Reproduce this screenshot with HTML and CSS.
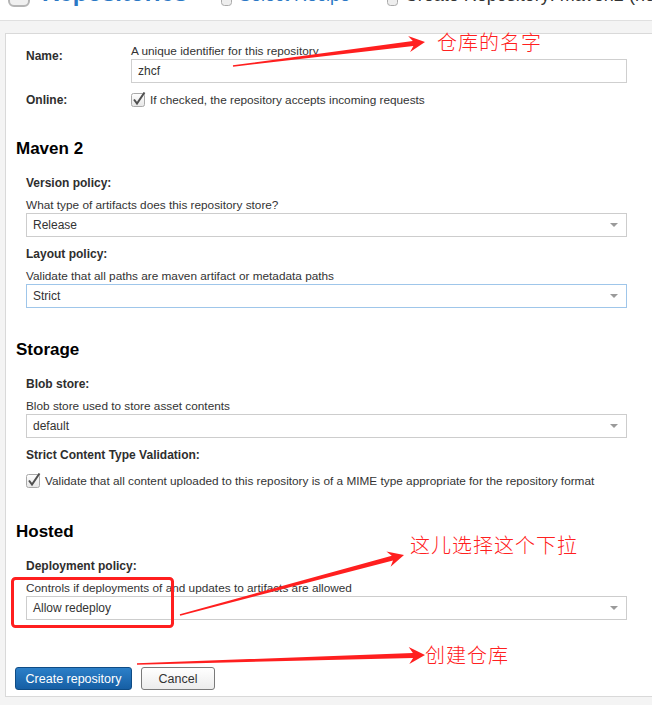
FILE: index.html
```html
<!DOCTYPE html>
<html>
<head>
<meta charset="utf-8">
<link rel="stylesheet" href="styles.css">
</head>
<body>
<div class="topbar">
  <div class="crumbs">
    <svg class="db-icon" width="22" height="26" viewBox="0 0 22 26"><rect x="1" y="1" width="20" height="24" rx="5" fill="#f0f0f0" stroke="#b5b5b5" stroke-width="2"/></svg>
    <span class="crumb-title">Repositories</span>
    <span class="crumb-sep">›</span>
    <svg class="db-small" width="11" height="14" viewBox="0 0 11 14"><rect x="0.5" y="0.5" width="10" height="13" rx="3" fill="#eee" stroke="#aaa"/></svg>
    <span class="crumb-link">Select Recipe</span>
    <span class="crumb-sep crumb-sep-2">›</span>
    <svg class="db-small" width="11" height="14" viewBox="0 0 11 14"><rect x="0.5" y="0.5" width="10" height="13" rx="3" fill="#eee" stroke="#aaa"/></svg>
    <span class="crumb-current">Create Repository: maven2 (hosted)</span>
  </div>
</div>

<div class="main">
  <div class="panel">
    <div class="pair pair-name">
      <div class="pair-label pair-label-name">Name:</div>
      <div class="pair-field">
        <div class="desc">A unique identifier for this repository</div>
        <div class="textbox">zhcf</div>
      </div>
    </div>
    <div class="pair pair-online">
      <div class="pair-label">Online:</div>
      <div class="check-row">
        <svg class="checkbox" width="15" height="15" viewBox="0 0 15 15"><defs><linearGradient id="cb1" x1="0" y1="0" x2="0" y2="1"><stop offset="0" stop-color="#ffffff"/><stop offset="1" stop-color="#e6e6e6"/></linearGradient></defs><rect x="0.5" y="1.5" width="13" height="13" rx="2" fill="url(#cb1)" stroke="#a9a9a9"/><path d="M3 7.5 L6 11.5 L13.5 0.5" fill="none" stroke="#505050" stroke-width="2"/></svg>
        <span>If checked, the repository accepts incoming requests</span>
      </div>
    </div>

    <h2 class="section-title">Maven 2</h2>
    <div class="field field-first">
      <div class="label">Version policy:</div>
      <div class="desc desc-gap">What type of artifacts does this repository store?</div>
      <div class="select"><span>Release</span><span class="caret"></span></div>
    </div>
    <div class="field">
      <div class="label">Layout policy:</div>
      <div class="desc desc-gap">Validate that all paths are maven artifact or metadata paths</div>
      <div class="select select-focus"><span>Strict</span><span class="caret"></span></div>
    </div>

    <h2 class="section-title">Storage</h2>
    <div class="field field-first">
      <div class="label">Blob store:</div>
      <div class="desc desc-gap">Blob store used to store asset contents</div>
      <div class="select"><span>default</span><span class="caret"></span></div>
    </div>
    <div class="field">
      <div class="label">Strict Content Type Validation:</div>
      <div class="check-row check-row-gap">
        <svg class="checkbox" width="15" height="15" viewBox="0 0 15 15"><defs><linearGradient id="cb2" x1="0" y1="0" x2="0" y2="1"><stop offset="0" stop-color="#ffffff"/><stop offset="1" stop-color="#e6e6e6"/></linearGradient></defs><rect x="0.5" y="1.5" width="13" height="13" rx="2" fill="url(#cb2)" stroke="#a9a9a9"/><path d="M3 7.5 L6 11.5 L13.5 0.5" fill="none" stroke="#505050" stroke-width="2"/></svg>
        <span>Validate that all content uploaded to this repository is of a MIME type appropriate for the repository format</span>
      </div>
    </div>

    <h2 class="section-title section-title-wide">Hosted</h2>
    <div class="field field-first">
      <div class="label">Deployment policy:</div>
      <div class="desc desc-gap">Controls if deployments of and updates to artifacts are allowed</div>
      <div class="select"><span>Allow redeploy</span><span class="caret"></span></div>
    </div>

    <div class="buttons">
      <button class="btn btn-primary" type="button">Create repository</button>
      <button class="btn btn-default" type="button">Cancel</button>
    </div>
  </div>
</div>

<svg class="annotations" width="652" height="705" viewBox="0 0 652 705">
  <polygon fill="#ff1f1f" points="232.9,65.3 412.8,41.0 408.1,36.0 425,42 410.1,51.9 413.4,46.0 233.1,66.7"/>
  <rect x="12.5" y="578.5" width="160" height="48" rx="3" fill="none" stroke="#ff1f1f" stroke-width="3"/>
  <polygon fill="#ff1f1f" points="179.8,614.3 391.8,555.7 386.4,551.4 404,555 390.6,566.8 393.0,560.5 180.2,615.7"/>
  <polygon fill="#ff1f1f" points="137,663.3 412.9,652.9 408.7,647.0 425,655 409.3,664.0 413.1,657.9 137,664.7"/>
</svg>
<div class="note note-name">仓库的名字</div>
<div class="note note-select">这儿选择这个下拉</div>
<div class="note note-create">创建仓库</div>
</body>
</html>
```

FILE: styles.css
```css
html, body {
  margin: 0;
  padding: 0;
}
body {
  width: 652px;
  height: 705px;
  overflow: hidden;
  background: #f4f4f4;
  font-family: "Liberation Sans", Arial, sans-serif;
  color: #333;
  position: relative;
}

/* top breadcrumb bar (clipped) */
.topbar {
  height: 20px;
  background: #fff;
  border-bottom: 1px solid #e0e0e0;
  overflow: hidden;
}
.crumbs {
  display: flex;
  align-items: baseline;
  height: 28px;
  margin-top: -21px;
  padding-left: 8px;
  white-space: nowrap;
}
.crumbs > * {
  flex: none;
}
.db-icon {
  align-self: flex-end;
  margin-bottom: 0;
  margin-right: 12px;
}
.crumb-title {
  font-size: 24px;
  font-weight: bold;
  color: #2b78c5;
  line-height: 28px;
}
.crumb-sep {
  font-size: 14px;
  color: #aaa;
  margin: 0 16px 0 13px;
}
.crumb-sep-2 {
  margin-left: 16px;
}
.db-small {
  align-self: flex-end;
  margin-bottom: 1px;
  margin-right: 7px;
}
.crumb-link {
  font-size: 18px;
  color: #2b78c5;
}
.crumb-current {
  font-size: 18px;
  color: #333;
}

/* main panel */
.main {
  padding: 12px 0 9px 5px;
}
.panel {
  background: #fff;
  border: 1px solid #d9d9d9;
  border-right: 0;
  padding: 0 25px 6px 10px;
}

.pair {
  display: flex;
  margin-left: 10px;
}
.pair-name {
  padding-top: 10px;
}
.pair-online {
  margin-top: 10px;
}
.pair-label {
  width: 105px;
  flex: none;
  font-size: 12px;
  font-weight: bold;
  line-height: 14px;
  color: #2e2e2e;
}
.pair-label-name {
  padding-top: 5px;
}
.pair-field {
  flex: 1;
}

.desc {
  font-size: 11.8px;
  line-height: 14px;
  color: #333;
}
.desc-gap {
  margin-top: 8px;
}

.textbox {
  margin-top: 1px;
  height: 22px;
  border: 1px solid #cfcfcf;
  padding: 0 6px;
  font-size: 12px;
  line-height: 22px;
  color: #333;
}

.check-row {
  display: flex;
  align-items: center;
  height: 14px;
  font-size: 11.8px;
  line-height: 14px;
}
.checkbox {
  flex: none;
  margin-right: 4px;
  margin-top: -2px;
}
.check-row-gap {
  margin-top: 12px;
}

.section-title {
  margin: 32px 0 0 0;
  font-size: 17px;
  line-height: 20px;
  font-weight: bold;
  color: #000;
}
.section-title-wide {
  margin-top: 34px;
}

.field {
  margin: 10px 0 0 10px;
}
.field-first {
  margin-top: 17px;
}
.label {
  font-size: 12px;
  font-weight: bold;
  line-height: 14px;
  color: #2e2e2e;
}

.select {
  margin-top: 1px;
  height: 22px;
  border: 1px solid #cdcdcd;
  display: flex;
  align-items: center;
  padding: 0 8px 0 6px;
  font-size: 12px;
  color: #333;
}
.select-focus {
  border-color: #9fc6ea;
}
.caret {
  margin-left: auto;
  width: 0;
  height: 0;
  border-left: 4px solid transparent;
  border-right: 4px solid transparent;
  border-top: 4px solid #9a9a9a;
}

.buttons {
  margin-top: 47px;
  display: flex;
  gap: 9px;
}
.btn {
  height: 23px;
  margin: 0;
  border-radius: 3px;
  font-family: "Liberation Sans", Arial, sans-serif;
  font-size: 12.5px;
  padding: 0;
  cursor: default;
}
.btn-primary {
  width: 117px;
  margin-left: -1px;
  color: #fff;
  background: linear-gradient(#2c7fc8, #165fa4);
  border: 1px solid #0f4c85;
}
.btn-default {
  width: 74px;
  color: #333;
  background: linear-gradient(#ffffff, #ececec);
  border: 1px solid #7a7a7a;
}

/* screenshot annotations overlay */
.annotations {
  position: absolute;
  left: 0;
  top: 0;
  pointer-events: none;
}
.note {
  position: absolute;
  font-family: "Noto Sans CJK SC", sans-serif;
  font-weight: 300;
  font-size: 20px;
  letter-spacing: 1px;
  line-height: 24px;
  color: #ff2020;
  white-space: nowrap;
}
.note-name {
  left: 437px;
  top: 30px;
}
.note-select {
  left: 410px;
  top: 533px;
}
.note-create {
  left: 425px;
  top: 643px;
}
```
